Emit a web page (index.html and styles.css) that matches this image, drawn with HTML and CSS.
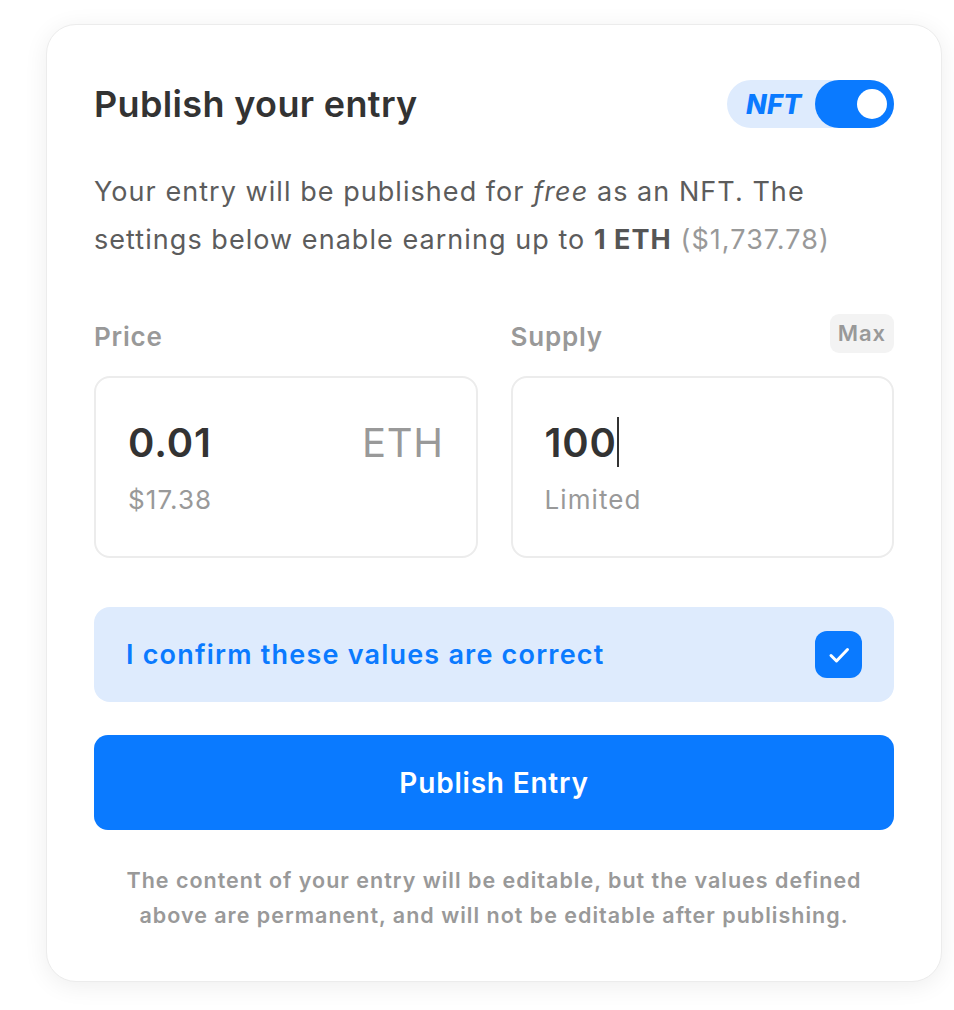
FILE: index.html
```html
<!DOCTYPE html>
<html>
<head>
<meta charset="utf-8">
<link rel="stylesheet" href="styles.css">
</head>
<body>
<div class="card">
  <div class="header">
    <h1 class="title">Publish your entry</h1>
    <div class="toggle">
      <span class="toggle-label">NFT</span>
      <span class="toggle-track"><span class="toggle-knob"></span></span>
    </div>
  </div>
  <p class="intro">Your entry will be published for <em>free</em> as an NFT. The settings below enable earning up to <strong>1 ETH</strong> <span class="muted">($1,737.78)</span></p>
  <div class="fields">
    <div class="field">
      <div class="label-row"><span class="label">Price</span></div>
      <div class="box">
        <div class="value-row"><span class="value">0.01</span><span class="unit">ETH</span></div>
        <div class="sub">$17.38</div>
      </div>
    </div>
    <div class="field">
      <div class="label-row"><span class="label">Supply</span><span class="max">Max</span></div>
      <div class="box">
        <div class="value-row"><span class="value">100<span class="caret"></span></span></div>
        <div class="sub">Limited</div>
      </div>
    </div>
  </div>
  <div class="confirm">
    <span class="confirm-text">I confirm these values are correct</span>
    <span class="checkbox">
      <svg width="26" height="26" viewBox="0 0 26 26"><path d="M5 13.5 L10.5 19 L21.5 7.5" fill="none" stroke="#fff" stroke-width="3" stroke-linecap="round" stroke-linejoin="round"/></svg>
    </span>
  </div>
  <button class="publish">Publish Entry</button>
  <p class="note">The content of your entry will be editable, but the values defined above are permanent, and will not be editable after publishing.</p>
</div>
</body>
</html>
```
FILE: styles.css
```css
* { box-sizing: border-box; }
html, body { margin: 0; padding: 0; background: #fff; }
body {
  font-family: Inter, "Noto Sans", sans-serif;
  padding: 24px 12px 28px 46px;
}
.card {
  width: 896px;
  height: 958px;
  border: 1px solid #ececec;
  border-radius: 30px;
  box-shadow: 0 4px 24px rgba(0,0,0,0.07);
  padding: 55px 47px 0 47px;
  background: #fff;
}
.header {
  display: flex;
  align-items: center;
  justify-content: space-between;
  height: 48px;
}
.title {
  margin: 0;
  font-size: 36px;
  font-weight: 600;
  color: #333;
  letter-spacing: 0.35px;
}
.toggle {
  display: flex;
  align-items: center;
  width: 167px;
  height: 48px;
  border-radius: 24px;
  background: #deebfd;
}
.toggle-label {
  font-size: 27px;
  font-weight: 800;
  font-style: italic;
  color: #0a7aff;
  padding-left: 19px;
  width: 88px;
  letter-spacing: 0.3px;
}
.toggle-track {
  display: flex;
  align-items: center;
  justify-content: flex-end;
  width: 79px;
  height: 48px;
  border-radius: 24px;
  background: #0a7aff;
  padding-right: 7px;
}
.toggle-knob {
  width: 30px;
  height: 30px;
  border-radius: 50%;
  background: #fff;
}
.intro {
  margin: 40px 0 0 0;
  font-size: 27px;
  line-height: 48px;
  letter-spacing: 1.05px;
  color: #5c5c5c;
}
.intro strong { font-weight: 700; color: #555; }
.intro .muted { color: #999; }
.fields {
  display: grid;
  grid-template-columns: 1fr 1fr;
  gap: 33px;
  margin-top: 49px;
}
.label-row {
  display: flex;
  justify-content: space-between;
  align-items: center;
  height: 40px;
}
.label {
  font-size: 26px;
  font-weight: 600;
  letter-spacing: 0.8px;
  color: #999;
  padding-top: 6px;
}
.max {
  font-size: 22px;
  font-weight: 600;
  letter-spacing: 0.9px;
  color: #999;
  background: #f3f3f3;
  border-radius: 9px;
  height: 39px;
  line-height: 39px;
  padding: 0 8px;
}
.box {
  margin-top: 23px;
  height: 182px;
  border: 2px solid #ececec;
  border-radius: 16px;
  padding: 40px 32px 0 32px;
}
.value-row {
  display: flex;
  justify-content: space-between;
  align-items: center;
  height: 48px;
}
.value {
  font-size: 40px;
  font-weight: 600;
  letter-spacing: 0.9px;
  color: #333;
  display: flex;
  align-items: center;
}
.caret {
  display: inline-block;
  width: 2px;
  height: 50px;
  background: #333;
}
.unit {
  font-size: 40px;
  font-weight: 400;
  letter-spacing: 0.6px;
  color: #999;
}
.sub {
  margin-top: 18px;
  font-size: 26px;
  line-height: 32px;
  letter-spacing: 1.1px;
  color: #999;
}
.confirm {
  margin-top: 49px;
  height: 95px;
  border-radius: 16px;
  background: #deebfd;
  display: flex;
  align-items: center;
  justify-content: space-between;
  padding: 0 32px;
}
.confirm-text {
  font-size: 27px;
  font-weight: 600;
  letter-spacing: 1.2px;
  color: #0a7aff;
}
.checkbox {
  width: 47px;
  height: 47px;
  border-radius: 12px;
  background: #0a7aff;
  display: flex;
  align-items: center;
  justify-content: center;
}
.publish {
  display: block;
  width: 100%;
  margin-top: 33px;
  height: 95px;
  border: none;
  border-radius: 14px;
  background: #0a7aff;
  color: #fff;
  font-family: inherit;
  font-size: 28px;
  font-weight: 600;
  letter-spacing: 0.8px;
}
.note {
  margin: 33px 0 0 0;
  padding: 0 20px;
  text-align: center;
  font-size: 21.5px;
  line-height: 35px;
  font-weight: 600;
  letter-spacing: 1px;
  color: #999;
}
```
